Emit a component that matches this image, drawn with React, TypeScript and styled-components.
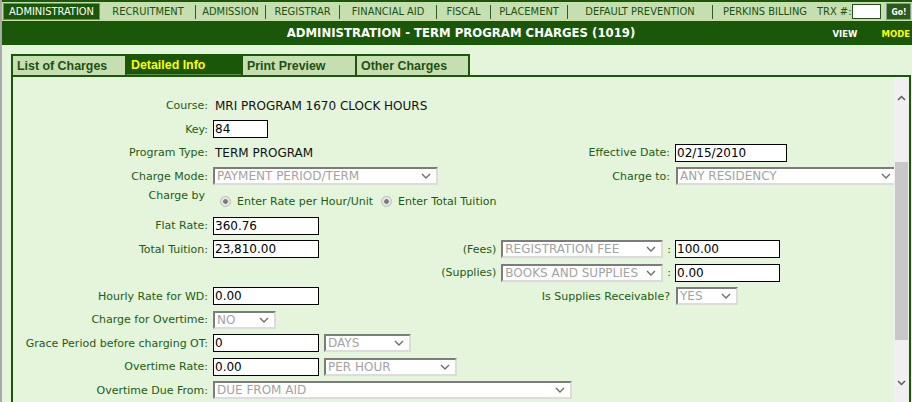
import styled, { createGlobalStyle } from 'styled-components';

const DARK = '#1b5708';
const NAV_BG = '#c6dfb0';
const PAGE_BG = '#e4f5dc';
const LABEL = '#1e5c12';

const GlobalStyle = createGlobalStyle`
  html, body { margin: 0; padding: 0; }
  body {
    background: ${PAGE_BG};
    border-left: 2px solid #a9a9a9;
    height: 402px;
    box-sizing: border-box;
    overflow: hidden;
    font-family: "DejaVu Sans", Verdana, sans-serif;
  }
`;

/* top module bar */
const NavBar = styled.div`
  display: flex;
  align-items: center;
  height: 19px;
  border-top: 2px solid ${DARK};
  background: ${NAV_BG};
  font-family: "DejaVu Sans Condensed", "DejaVu Sans", sans-serif;
  font-stretch: condensed;
  font-size: 11px;
  color: #1d4f10;
  white-space: nowrap;
`;

const ActiveModule = styled.div`
  margin-left: 1px;
  width: 97px;
  height: 17px;
  box-sizing: border-box;
  background: ${DARK};
  border: 1px solid #6a9858;
  color: #fff;
  display: flex;
  align-items: center;
  justify-content: center;
  flex: none;
`;

const NavCell = styled.div<{ $w: number }>`
  width: ${({ $w }) => $w}px;
  text-align: center;
  flex: none;
`;

const NavSep = styled.div<{ $hidden?: boolean }>`
  width: 1px;
  height: 14px;
  background: ${({ $hidden }) => ($hidden ? 'transparent' : '#2d5e1e')};
  flex: none;
`;

const TrxInput = styled.div`
  margin-left: 1px;
  width: 29px;
  height: 15px;
  box-sizing: border-box;
  background: #fff;
  border: 1px solid #2a4a20;
  flex: none;
`;

const GoButton = styled.div`
  margin-left: 5px;
  width: 25px;
  height: 17px;
  box-sizing: border-box;
  background: #2b5a1c;
  border: 1px solid #8c9a88;
  color: #fff;
  font-family: "DejaVu Sans", sans-serif;
  font-weight: bold;
  font-size: 8.5px;
  display: flex;
  align-items: center;
  justify-content: center;
  flex: none;
`;

/* title */
const TitleBar = styled.div`
  display: grid;
  grid-template-columns: 1fr auto 1fr;
  align-items: center;
  height: 24px;
  padding-left: 8px;
  background: ${DARK};
`;

const Title = styled.div`
  color: #fff;
  font-weight: bold;
  font-size: 11.7px;
  white-space: nowrap;
`;

const ModeTag = styled.div`
  justify-self: end;
  display: flex;
  gap: 24px;
  padding: 1px 2px 0 0;
  font-size: 8.5px;
  font-weight: bold;
`;

const ModeWord = styled.span<{ $hl?: boolean }>`
  color: ${({ $hl }) => ($hl ? '#ffff00' : '#fff')};
`;

/* tabs + panel */
const Main = styled.div`
  padding: 9px 0 0 9px;
`;

const TabRow = styled.div`
  display: flex;
  height: 21px;
`;

const Tab = styled.div<{ $w: number; $active?: boolean }>`
  width: ${({ $w }) => $w}px;
  margin-right: -2px;
  box-sizing: border-box;
  border: 2px solid ${DARK};
  border-bottom: ${({ $active }) => ($active ? '1px solid #5d8c4c' : 'none')};
  background: ${({ $active }) => ($active ? DARK : NAV_BG)};
  color: ${({ $active }) => ($active ? '#ffff00' : '#1d5010')};
  font-family: "Liberation Sans", Arial, sans-serif;
  font-weight: bold;
  font-size: 12.4px;
  padding-left: 4px;
  display: flex;
  align-items: center;
  flex: none;
`;

const Panel = styled.div`
  width: 900px;
  height: 327px;
  box-sizing: border-box;
  border: 2px solid ${DARK};
  border-bottom: none;
  display: flex;
`;

const Content = styled.div`
  flex: 1;
  overflow: hidden;
  padding-top: 17px;
`;

const ScrollTrack = styled.div`
  width: 15px;
  flex: none;
  background: #f0f0f0;
  display: flex;
  flex-direction: column;
  align-items: center;
`;

const ScrollThumb = styled.div`
  width: 13px;
  height: 178px;
  margin: 61px 0 40px;
  background: #c8c8c8;
  flex: none;
`;

const Arrow = styled.svg<{ $top?: number }>`
  margin-top: ${({ $top }) => $top ?? 0}px;
  flex: none;
`;

/* form grid */
const Form = styled.div`
  display: grid;
  grid-template-columns: 196px 230px 224px 219px;
  grid-template-rows: repeat(4, 23.5px) 26px repeat(8, 23.5px);
  column-gap: 4px;
  align-items: center;
`;

const FieldLabel = styled.div<{ $col?: number; $top?: boolean }>`
  grid-column: ${({ $col }) => $col ?? 1};
  align-self: ${({ $top }) => ($top ? 'start' : 'center')};
  padding: ${({ $top }) => ($top ? '1px 4px 0 0' : '0 1px 0 0')};
  text-align: right;
  font-size: 11px;
  color: ${LABEL};
  white-space: nowrap;
`;

const Cell = styled.div<{ $col: string; $end?: boolean; $gap?: number }>`
  grid-column: ${({ $col }) => $col};
  display: flex;
  align-items: center;
  justify-content: ${({ $end }) => ($end ? 'flex-end' : 'flex-start')};
  gap: ${({ $gap }) => $gap ?? 0}px;
  min-width: 0;
  white-space: nowrap;
`;

const Value = styled.span`
  padding-left: 2px;
  font-size: 12px;
  color: #111;
`;

const SmallText = styled.span<{ $mr?: number }>`
  margin-right: ${({ $mr }) => $mr ?? 0}px;
  font-size: 11px;
  color: ${LABEL};
`;

const TextBox = styled.input<{ $w: number }>`
  width: ${({ $w }) => $w}px;
  height: 18px;
  box-sizing: border-box;
  margin: 0;
  padding: 0 1px;
  border: 1px solid #000;
  border-radius: 0;
  background: #fff;
  font-family: "DejaVu Sans", sans-serif;
  font-size: 12px;
  color: #000;
  outline: none;
  flex: none;
`;

const SelectBox = styled.div<{ $w: number; $shift?: number }>`
  width: ${({ $w }) => $w}px;
  height: 18px;
  margin-left: ${({ $shift }) => $shift ?? 0}px;
  box-sizing: border-box;
  border-style: solid;
  border-width: 2px;
  border-color: #7c7c7c #dcdcdc #dcdcdc #7c7c7c;
  background: #fff;
  display: flex;
  align-items: center;
  justify-content: space-between;
  padding: 0 5px 0 2px;
  font-size: 12px;
  color: #a3a3a3;
  flex: none;
  overflow: hidden;
`;

const RadioDot = styled.span<{ $ml: number }>`
  width: 11px;
  height: 11px;
  margin: 0 6px 0 ${({ $ml }) => $ml}px;
  box-sizing: border-box;
  border-radius: 50%;
  border: 1px solid #bcbcbc;
  background: radial-gradient(circle, #7a7a7a 0 2px, #e4e4e4 2.6px);
  flex: none;
`;

const Chevron = () => (
  <svg width="10" height="6" viewBox="0 0 10 6">
    <polyline points="1,1 5,5 9,1" fill="none" stroke="#6e6e6e" strokeWidth="1.4" />
  </svg>
);

const Select = ({ w, text, shift }: { w: number; text: string; shift?: number }) => (
  <SelectBox $w={w} $shift={shift}>
    <span>{text}</span>
    <Chevron />
  </SelectBox>
);

const navItems: [string, number][] = [
  ['RECRUITMENT', 94],
  ['ADMISSION', 69],
  ['REGISTRAR', 73],
  ['FINANCIAL AID', 96],
  ['FISCAL', 53],
  ['PLACEMENT', 76],
  ['DEFAULT PREVENTION', 144],
  ['PERKINS BILLING', 104],
];

const tabs: [string, number, boolean][] = [
  ['List of Charges', 116, false],
  ['Detailed Info', 118, true],
  ['Print Preview', 116, false],
  ['Other Charges', 115, false],
];

export default function App() {
  return (
    <>
      <GlobalStyle />
      <NavBar>
        <ActiveModule>ADMINISTRATION</ActiveModule>
        <NavSep $hidden />
        {navItems.flatMap(([name, w], i) => [
          i > 0 ? <NavSep key={`s${i}`} /> : null,
          <NavCell key={name} $w={w}>{name}</NavCell>,
        ])}
        <span>TRX #:</span>
        <TrxInput />
        <GoButton>Go!</GoButton>
      </NavBar>
      <TitleBar>
        <span />
        <Title>ADMINISTRATION - TERM PROGRAM CHARGES (1019)</Title>
        <ModeTag>
          <ModeWord>VIEW</ModeWord>
          <ModeWord $hl>MODE</ModeWord>
        </ModeTag>
      </TitleBar>
      <Main>
        <TabRow>
          {tabs.map(([name, w, active]) => (
            <Tab key={name} $w={w} $active={active}>{name}</Tab>
          ))}
        </TabRow>
        <Panel>
          <Content>
            <Form>
              <FieldLabel>Course:</FieldLabel>
              <Cell $col="2 / 5"><Value>MRI PROGRAM 1670 CLOCK HOURS</Value></Cell>

              <FieldLabel>Key:</FieldLabel>
              <Cell $col="2"><TextBox $w={55} defaultValue="84" readOnly /></Cell>

              <FieldLabel>Program Type:</FieldLabel>
              <Cell $col="2"><Value>TERM PROGRAM</Value></Cell>
              <FieldLabel $col={3}>Effective Date:</FieldLabel>
              <Cell $col="4"><TextBox $w={112} defaultValue="02/15/2010" readOnly /></Cell>

              <FieldLabel>Charge Mode:</FieldLabel>
              <Cell $col="2"><Select w={225} text="PAYMENT PERIOD/TERM" /></Cell>
              <FieldLabel $col={3}>Charge to:</FieldLabel>
              <Cell $col="4"><Select w={222} shift={1} text="ANY RESIDENCY" /></Cell>

              <FieldLabel $top>Charge by</FieldLabel>
              <Cell $col="2 / 5">
                <RadioDot $ml={7} />
                <SmallText>Enter Rate per Hour/Unit</SmallText>
                <RadioDot $ml={8} />
                <SmallText>Enter Total Tuition</SmallText>
              </Cell>

              <FieldLabel>Flat Rate:</FieldLabel>
              <Cell $col="2"><TextBox $w={106} defaultValue="360.76" readOnly /></Cell>

              <FieldLabel>Total Tuition:</FieldLabel>
              <Cell $col="2"><TextBox $w={106} defaultValue="23,810.00" readOnly /></Cell>
              <Cell $col="3" $end $gap={4}>
                <SmallText $mr={1}>(Fees)</SmallText>
                <Select w={162} text="REGISTRATION FEE" />
                <SmallText>:</SmallText>
              </Cell>
              <Cell $col="4"><TextBox $w={105} defaultValue="100.00" readOnly /></Cell>

              <Cell $col="3" $end $gap={4}>
                <SmallText $mr={1}>(Supplies)</SmallText>
                <Select w={162} text="BOOKS AND SUPPLIES" />
                <SmallText>:</SmallText>
              </Cell>
              <Cell $col="4"><TextBox $w={105} defaultValue="0.00" readOnly /></Cell>

              <FieldLabel>Hourly Rate for WD:</FieldLabel>
              <Cell $col="2"><TextBox $w={106} defaultValue="0.00" readOnly /></Cell>
              <FieldLabel $col={3}>Is Supplies Receivable?</FieldLabel>
              <Cell $col="4"><Select w={62} shift={1} text="YES" /></Cell>

              <FieldLabel>Charge for Overtime:</FieldLabel>
              <Cell $col="2"><Select w={63} text="NO" /></Cell>

              <FieldLabel>Grace Period before charging OT:</FieldLabel>
              <Cell $col="2" $gap={5}>
                <TextBox $w={106} defaultValue="0" readOnly />
                <Select w={87} text="DAYS" />
              </Cell>

              <FieldLabel>Overtime Rate:</FieldLabel>
              <Cell $col="2" $gap={5}>
                <TextBox $w={106} defaultValue="0.00" readOnly />
                <Select w={133} text="PER HOUR" />
              </Cell>

              <FieldLabel>Overtime Due From:</FieldLabel>
              <Cell $col="2 / 4"><Select w={359} text="DUE FROM AID" /></Cell>
            </Form>
          </Content>
          <ScrollTrack>
            <Arrow $top={18} width="9" height="6" viewBox="0 0 9 6">
              <polyline points="1,5 4.5,1.5 8,5" fill="none" stroke="#5a5a5a" strokeWidth="1.5" />
            </Arrow>
            <ScrollThumb />
            <Arrow width="9" height="6" viewBox="0 0 9 6">
              <polyline points="1,1 4.5,4.5 8,1" fill="none" stroke="#5a5a5a" strokeWidth="1.5" />
            </Arrow>
          </ScrollTrack>
        </Panel>
      </Main>
    </>
  );
}
